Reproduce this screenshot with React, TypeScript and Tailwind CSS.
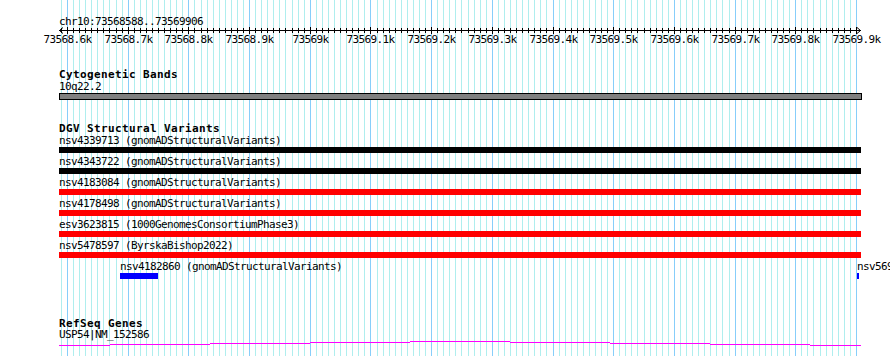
import React from "react";

const START = 73568588;
const px = (p: number) => Math.round(59.7 + (p - START) * 0.6069);
const ticks = Array.from({ length: 132 }, (_, i) => 73568590 + i * 10);
const majors = ticks.filter((p) => p % 100 === 0);

const label = (p: number) =>
  p % 1000 === 0 ? `${p / 1000}k` : `${(p / 1000).toFixed(1)}k`;

const variants = [
  { name: "nsv4339713 (gnomADStructuralVariants)", color: "bg-black" },
  { name: "nsv4343722 (gnomADStructuralVariants)", color: "bg-black" },
  { name: "nsv4183084 (gnomADStructuralVariants)", color: "bg-[#ff0000]" },
  { name: "nsv4178498 (gnomADStructuralVariants)", color: "bg-[#ff0000]" },
  { name: "esv3623815 (1000GenomesConsortiumPhase3)", color: "bg-[#ff0000]" },
  { name: "nsv5478597 (ByrskaBishop2022)", color: "bg-[#ff0000]" },
];

// intron hat drawn by the browser as 1px steps
const hat = [
  [59, 110, 5],
  [110, 210, 4],
  [210, 310, 3],
  [310, 410, 2],
  [410, 510, 1],
  [510, 610, 2],
  [610, 710, 3],
  [710, 810, 4],
  [810, 861, 5],
];

const mono = "font-['DejaVu_Sans_Mono',monospace] text-[11px] tracking-[-0.62px] text-black";
const heading = "font-['DejaVu_Sans_Mono',monospace] text-[11px] font-bold tracking-[0.38px] text-black h-[11px] leading-[11px] ml-[59px] whitespace-nowrap";

function Grid() {
  return (
    <svg className="absolute inset-0" width={890} height={356} shapeRendering="crispEdges">
      {ticks.map((p) => (
        <line
          key={p}
          x1={px(p) + 0.5}
          x2={px(p) + 0.5}
          y1={0}
          y2={356}
          stroke={p % 100 === 0 ? "#87cefa" : "#afeeee"}
          strokeWidth={1}
        />
      ))}
    </svg>
  );
}

function Ruler() {
  return (
    <svg width={890} height={19} className="block" shapeRendering="crispEdges">
      <line x1={59} x2={861} y1={3.5} y2={3.5} stroke="#000" />
      {ticks.map((p) => {
        const major = p % 100 === 0;
        return (
          <line
            key={p}
            x1={px(p) + 0.5}
            x2={px(p) + 0.5}
            y1={major ? 0 : 1}
            y2={major ? 7 : 6}
            stroke="#000"
          />
        );
      })}
      <polyline points="63,0.5 59.5,3.5 63,6.5" fill="none" stroke="#000" shapeRendering="auto" />
      <polyline points="857,0.5 860.5,3.5 857,6.5" fill="none" stroke="#000" shapeRendering="auto" />
      {majors.map((p) => (
        <text
          key={p}
          x={px(p) + 0.5}
          y={16}
          textAnchor="middle"
          fontFamily="DejaVu Sans Mono, monospace"
          fontSize={11}
          letterSpacing={-0.62}
          fill="#000"
        >
          {label(p)}
        </text>
      ))}
    </svg>
  );
}

export default function App() {
  return (
    <div className="relative w-[890px] h-[356px] overflow-hidden bg-white">
      <Grid />
      <div className="relative flex flex-col">
        <div className={`${mono} h-[11px] leading-[11px] mt-[16px] ml-[59px]`}>chr10:73568588..73569906</div>
        <Ruler />

        {/* Cytogenetic Bands */}
        <div className={`${heading} mt-[23px]`}>Cytogenetic Bands</div>
        <div className={`${mono} h-[13px] leading-[13px] ml-[59px]`}>10q22.2</div>
        <div className="ml-[59px] w-[803px] h-[7px] border border-black bg-[#808080]" />

        {/* DGV Structural Variants */}
        <div className={`${heading} mt-[23px]`}>DGV Structural Variants</div>
        <div className="flex flex-col gap-[2px] mt-[0px]">
          {variants.map((v) => (
            <div key={v.name} className="ml-[59px] w-[802px] flex flex-col">
              <div className={`${mono} h-[13px] leading-[13px] whitespace-nowrap`}>{v.name}</div>
              <div className={`h-[6px] ${v.color}`} />
            </div>
          ))}
          <div className="flex">
            <div className="ml-[120px] w-[38px] flex flex-col">
              <div className={`${mono} h-[13px] leading-[13px] whitespace-nowrap`}>nsv4182860 (gnomADStructuralVariants)</div>
              <div className="h-[6px] bg-[#0000ff]" />
            </div>
            <div className="ml-[699px] w-[2px] flex flex-col">
              <div className={`${mono} h-[13px] leading-[13px] whitespace-nowrap`}>nsv569</div>
              <div className="h-[6px] bg-[#0000ff]" />
            </div>
          </div>
        </div>

        {/* RefSeq Genes */}
        <div className={`${heading} mt-[39px]`}>RefSeq Genes</div>
        <div className={`${mono} h-[11px] leading-[11px] ml-[59px]`}>USP54|NM_152586</div>
        <svg width={890} height={6} className="block" shapeRendering="crispEdges">
          {hat.map(([a, b, y]) => (
            <rect key={a} x={a} y={y} width={b - a} height={1} fill="#ff00ff" />
          ))}
        </svg>
      </div>
    </div>
  );
}
